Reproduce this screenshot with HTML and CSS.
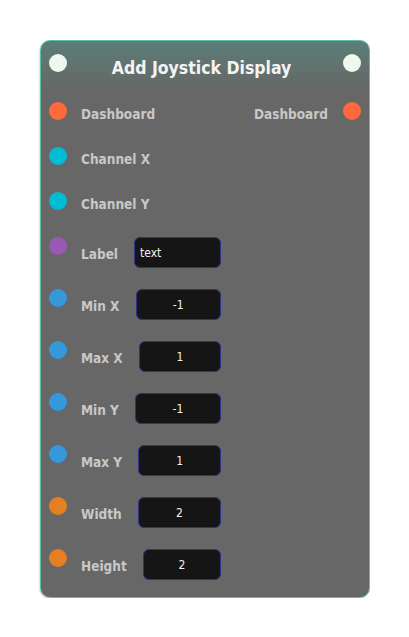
FILE: index.html
```html
<!DOCTYPE html>
<html>
<head>
<meta charset="utf-8">
<link rel="stylesheet" href="styles.css">
</head>
<body>
<div class="node">
  <div class="header">
    <span class="dot dot-white"></span>
    <div class="title">Add Joystick Display</div>
    <span class="dot dot-white"></span>
  </div>
  <div class="rows">
    <div class="row">
      <span class="dot dot-red"></span>
      <span class="label">Dashboard</span>
      <span class="out">
        <span class="label">Dashboard</span>
        <span class="dot dot-red"></span>
      </span>
    </div>
    <div class="row">
      <span class="dot dot-cyan"></span>
      <span class="label">Channel X</span>
    </div>
    <div class="row">
      <span class="dot dot-cyan"></span>
      <span class="label">Channel Y</span>
    </div>
    <div class="row">
      <span class="dot dot-purple"></span>
      <div class="field">
        <span class="label">Label</span>
        <span class="input input-left">text</span>
      </div>
    </div>
    <div class="row">
      <span class="dot dot-blue"></span>
      <div class="field">
        <span class="label">Min X</span>
        <span class="input">-1</span>
      </div>
    </div>
    <div class="row">
      <span class="dot dot-blue"></span>
      <div class="field">
        <span class="label">Max X</span>
        <span class="input">1</span>
      </div>
    </div>
    <div class="row">
      <span class="dot dot-blue"></span>
      <div class="field">
        <span class="label">Min Y</span>
        <span class="input">-1</span>
      </div>
    </div>
    <div class="row">
      <span class="dot dot-blue"></span>
      <div class="field">
        <span class="label">Max Y</span>
        <span class="input">1</span>
      </div>
    </div>
    <div class="row">
      <span class="dot dot-orange"></span>
      <div class="field">
        <span class="label">Width</span>
        <span class="input">2</span>
      </div>
    </div>
    <div class="row">
      <span class="dot dot-orange"></span>
      <div class="field">
        <span class="label">Height</span>
        <span class="input">2</span>
      </div>
    </div>
  </div>
</div>
</body>
</html>
```
FILE: styles.css
```css
html, body {
  margin: 0;
  padding: 0;
  background: #ffffff;
}

body {
  font-family: "DejaVu Sans Condensed", "DejaVu Sans", sans-serif;
  font-stretch: condensed;
}

.node {
  margin: 40px 0 0 40px;
  width: 330px;
  height: 558px;
  box-sizing: border-box;
  border: 1px solid #5cbfa6;
  border-radius: 10px;
  background: linear-gradient(#5b7e77 0px, #676767 48px);
  box-shadow: -1px 1px 1px rgba(0, 0, 0, 0.12);
}

.header {
  display: flex;
  align-items: flex-start;
  height: 61px;
  box-sizing: border-box;
  padding: 13px 8px 0 8px;
}

.title {
  flex: 1;
  text-align: center;
  color: #f4f4f4;
  font-weight: bold;
  font-size: 17.5px;
  line-height: 22px;
  margin-top: 3px;
  padding-right: 7px;
}

.dot {
  flex: none;
  width: 18px;
  height: 18px;
  border-radius: 50%;
}

.dot-white { background: #eef8ec; }
.dot-red { background: #ff6a3d; }
.dot-cyan { background: #00bcd4; }
.dot-purple { background: #9b59b6; }
.dot-blue { background: #3498db; }
.dot-orange { background: #e67e22; }

.rows {
  display: flex;
  flex-direction: column;
  gap: 21px;
  padding: 0 8px;
}

.row {
  display: flex;
  align-items: flex-start;
}

.row > .dot {
  margin-right: 14px;
}

.label {
  color: #c8c8c8;
  font-weight: bold;
  font-size: 13.5px;
  line-height: 24px;
  padding-top: 1px;
  white-space: nowrap;
}

.row > .label,
.out .label {
  padding-top: 1px;
  line-height: 23px;
}

.out {
  margin-left: auto;
  display: flex;
  align-items: flex-start;
  gap: 15px;
}

.field {
  display: flex;
  align-items: center;
  width: 140px;
  height: 31px;
  padding-top: 2px;
  box-sizing: border-box;
}

.input {
  flex: 1;
  margin-left: 16px;
  height: 31px;
  box-sizing: border-box;
  margin-top: -2px;
  border: 1px solid #2e3288;
  border-radius: 6px;
  background: #151515;
  color: #f2f2f2;
  font-size: 12px;
  font-stretch: normal;
  display: flex;
  align-items: center;
  justify-content: center;
}

.input-left {
  justify-content: flex-start;
  padding-left: 5px;
}
```
